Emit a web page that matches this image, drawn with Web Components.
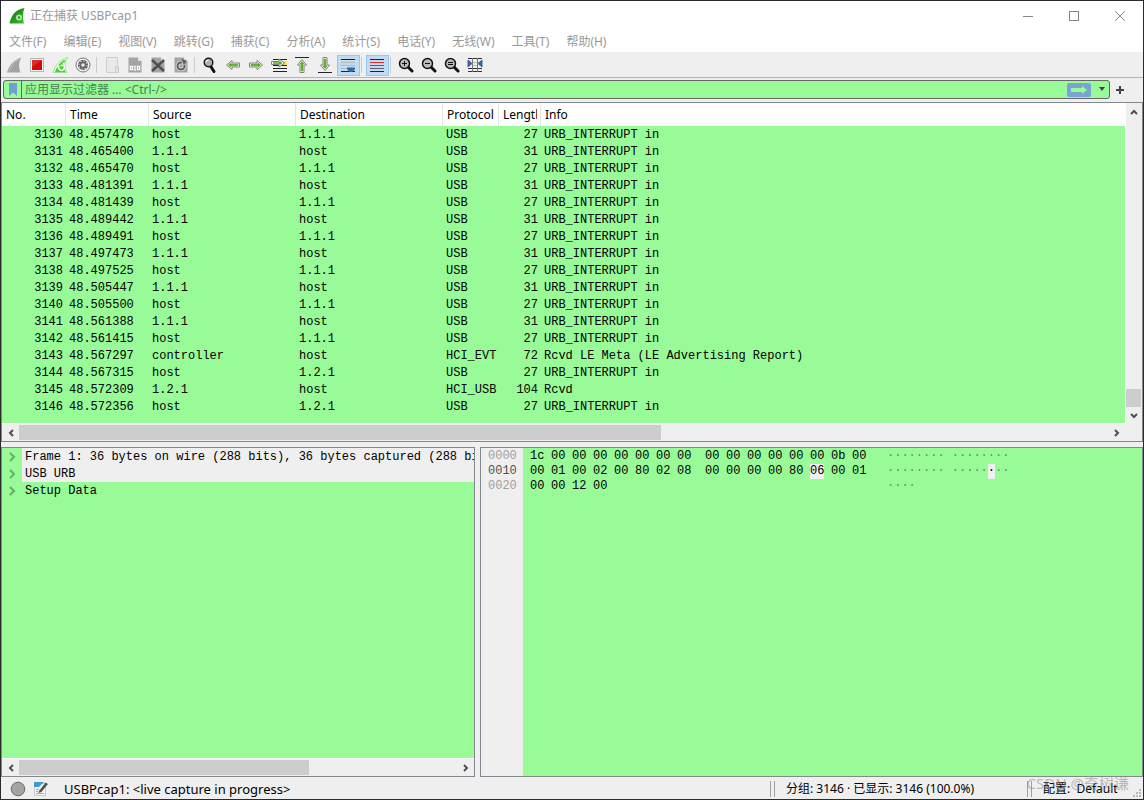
<!DOCTYPE html>
<html lang="zh-CN">
<head>
<meta charset="utf-8">
<title>USBPcap1</title>
<style>
html,body{margin:0;height:100%}
body{font:12px/16px "Noto Sans","Noto Sans CJK SC",sans-serif;color:#000;background:#efefef;--mono:"Liberation Mono",monospace}
</style>
</head>
<body>
<capture-window></capture-window>
<script>
const define=(name,css,html)=>{
  customElements.define(name,class extends HTMLElement{
    constructor(){super();this.attachShadow({mode:'open'})}
    connectedCallback(){
      const h=typeof html==='function'?html(this):html;
      this.shadowRoot.innerHTML='<style>*{box-sizing:border-box}'+css+'</style>'+h;
    }
  });
};

/* ---------- icons, 16 x 16 ---------- */
const fin='M1 15.500C3 9 7 3 15.500.500C12.500 5 12.500 10 14.500 15.500Z';
const page='<path d="M1.500.500H11L14.500 4V15.500H1.500Z" fill="#a3a5a2"/><path d="M11 .500V4h3.500Z" fill="#e8e8e8"/>';
const lens='<path d="M10 10L14 14" stroke="#111" stroke-width="3" stroke-linecap="round"/><circle cx="6.500" cy="6.500" r="5" fill="#b9bcbb" stroke="#111" stroke-width="1.500"/>';
const arrow='<path d="M1.500 8L7 3.500V6H14.500V10H7V12.500Z" fill="#fff" stroke="#7f827d"/><path d="M3.500 8L6 6V7.200H13V8.800H6V10Z" fill="#4caa10" stroke="#4caa10" stroke-width=".6"/>';
const ICONS={
 app:`<defs><linearGradient id="g" x2="1" y2="1"><stop stop-color="#0b6b12"/><stop offset="1" stop-color="#3fc52b"/></linearGradient></defs><path d="M.500 15.500C2 8 6 1.500 15.500 0C13.500 5 13.500 10 15 15.500Z" fill="url(#g)"/><circle cx="10" cy="9.500" r="3" fill="#b7e5ae"/><circle cx="10" cy="9.500" r="1.200" fill="#2e9c2a"/>`,
 fin:`<path d="${fin}" fill="#a3a3a3"/><path d="M3 14.500C5 9 8 4.500 13 2.500" fill="none" stroke="#c4c4c4"/>`,
 stop:'<rect x="1.500" y="1.500" width="13" height="13" fill="#fff" stroke="#b5b5b5"/><rect x="3" y="3" width="10" height="10" fill="#d80808"/><path d="M3 3H13L3 10Z" fill="#f04a4a" opacity=".5"/>',
 restart:`<path d="${fin}" fill="#fff" stroke="#9adf90"/><path d="M3 15C5 9 8 4.500 13.500 2.500C11.500 6 12 11 13.500 15Z" fill="#3cdd22"/><path d="M7 8.500a3 3 0 1 0 4.500-.5M11.500 5.500V8.500H8.500" fill="none" stroke="#fff" stroke-width="1.600"/>`,
 gear:'<circle cx="8" cy="8" r="7" fill="#f4f4f4" stroke="#777"/><circle cx="8" cy="8" r="5" fill="#555"/><circle cx="8" cy="8" r="4" fill="none" stroke="#ddd" stroke-width="1.200" stroke-dasharray="1.500 1.600"/><circle cx="8" cy="8" r="3.200" fill="#666"/><circle cx="8" cy="8" r="1.800" fill="#e8e8e8"/>',
 open:'<path d="M2.500 .500H13.500V15.500H2.500Z" fill="#e9e9e9" stroke="#cfcfcf"/><path d="M11.500 9.500H14.500V15.500H11.500Z" fill="#e0e0e0" stroke="#cdcdcd"/>',
 save:page+'<rect x="2" y="8" width="12" height="6" fill="#b5b6b4"/><g fill="none" stroke="#fff"><rect x="3.500" y="9.500" width="2" height="3"/><path d="M8 9V13M7 9.500H8M7 13H9"/><rect x="10.500" y="9.500" width="2" height="3"/></g>',
 close:page+'<path d="M2 3L14 14M14 3L2 14" stroke="#4e504e" stroke-width="2.400"/>',
 reload:page+'<path d="M11.500 7.500V9A3.500 3.500 0 1 1 8 5.500H9.500" fill="none" stroke="#e4e4e4" stroke-width="3.500"/><path d="M11.500 8V9A3.500 3.500 0 1 1 8 5.500H9" fill="none" stroke="#5a5c5a" stroke-width="2"/><path d="M8.500 2L13.500 3.500L11 8Z" fill="#5a5c5a"/>',
 find:'<path d="M8.500 9L12 14.500" stroke="#111" stroke-width="3" stroke-linecap="round"/><circle cx="6.500" cy="5.500" r="4.300" fill="#aeb1b1" stroke="#151515" stroke-width="1.400"/><path d="M4 5.500A2.500 2.500 0 0 1 6.500 3" fill="none" stroke="#fff"/>',
 back:arrow,
 fwd:`<g transform="rotate(180 8 8)">${arrow}</g>`,
 goto:'<path d="M2 2.500H16M2 8.500H16M2 11.500H16M2 14.500H16" stroke="#222"/><rect x="11" y="4" width="5" height="4" fill="#fbe05a"/><path d="M.500 4.500H8V2L13.500 6L8 10V7.500H.500Z" fill="#fff" stroke="#7f827d"/><path d="M2 6H11M9 4.500V7.500" stroke="#4caa10" stroke-width="1.600"/>',
 top:`<path d="M1 .500H15" stroke="#222"/><g transform="translate(0 1) rotate(90 8 8)">${arrow}</g>`,
 bottom:`<path d="M1 15.500H15" stroke="#222"/><g transform="translate(0 -1) rotate(-90 8 8)">${arrow}</g>`,
 auto:'<path d="M1 2.500H15M1 14.500H15" stroke="#222"/><path d="M1 5.500H15M1 8.500H15M1 11.500H15" stroke="#b5bab5"/><path d="M7 10.500H15V12L12.500 15H9.500L7 12Z" fill="#3465a4"/>',
 color:'<path d="M1 2.500H15M1 14.500H15" stroke="#222"/><path d="M1 5.500H15" stroke="#ef2929"/><path d="M1 8.500H15" stroke="#3465a4"/><path d="M1 11.500H15" stroke="#75507b"/>',
 zin:lens+'<path d="M4 6.500H9M6.500 4V9" stroke="#111"/>',
 zout:lens+'<path d="M4 6.500H9" stroke="#111"/>',
 z1:lens+'<path d="M4 5.500H9M4 7.500H9" stroke="#111"/>',
 resize:'<path d="M1 1.500H15M1 14.500H15M1 11.500H15" stroke="#333"/><path d="M5 5.500H11M5 8.500H11" stroke="#b5bab5"/><path d="M5.500 1V15M10.500 1V15" stroke="#777"/><path d="M1 3V10L5 6.500ZM15 3V10L11 6.500Z" fill="#3465a4" stroke="#3465a4"/>',
 note:'<rect x="1.500" y="2.500" width="11" height="12" fill="#f4f6f4" stroke="#c8ccc8"/><path d="M1 1H11L6 6H1Z" fill="#3f9bd0"/><path d="M3 8.500H6M3 10.500H5M3 12.500H11" stroke="#a7aba7"/><path d="M6 10L12.500 1.500L15 3L8.500 11L5.500 12Z" fill="#555"/>',
 led:'<circle cx="8" cy="8" r="6.800" fill="#a2a5a0" stroke="#686b68"/>',
 mark:'<path d="M4 1H12V14L8 10.500L4 14Z" fill="#729fcf"/>'
};
define('svg-icon',':host{display:block;width:16px;height:16px}svg{display:block}',
  el=>`<svg width="16" height="16" viewBox="0 0 16 16" aria-hidden="true">${ICONS[el.getAttribute('name')]}</svg>`);

/* ---------- title bar ---------- */
define('title-bar',`:host{display:flex;align-items:center;height:30px;padding-left:8px;background:#fff;color:#999}
 h1{font:inherit;margin:0 0 0 5px;flex:1}
 button{width:46px;height:30px;border:0;background:none;padding:0;display:grid;place-items:center}`,
 `<svg-icon name="app"></svg-icon><h1><slot></slot></h1>
 <button aria-label="最小化"><svg width="12" height="12"><path d="M1 6.500H11" stroke="#888"/></svg></button>
 <button aria-label="最大化"><svg width="12" height="12"><rect x="1.500" y="1.500" width="9" height="9" fill="none" stroke="#888"/></svg></button>
 <button aria-label="关闭"><svg width="12" height="12"><path d="M1 1L11 11M11 1L1 11" stroke="#888"/></svg></button>`);

/* ---------- menu ---------- */
define('menu-bar',`:host{display:flex;gap:1px;height:22px;background:#fff;border-bottom:1px solid #eee}
 button{font:inherit;border:0;background:none;color:#999;padding:0 8px;white-space:nowrap}`,
 ()=>['文件(F)','编辑(E)','视图(V)','跳转(G)','捕获(C)','分析(A)','统计(S)','电话(Y)','无线(W)','工具(T)','帮助(H)'].map(t=>`<button>${t}</button>`).join(''));

/* ---------- toolbar ---------- */
define('tool-bar',`:host{display:flex;align-items:center;height:25px;padding-left:2px;border-bottom:1px solid #b4b4b4}
 button{width:23px;height:21px;padding:0 1px 0 0;border:1px solid transparent;background:none;display:grid;place-items:center}
 button[aria-pressed]{background:#c0dcf3;border-color:#90c8f6}
 svg-icon{justify-self:start;margin-left:2px}
 i{width:6px;height:16px;background:linear-gradient(#ccc,#ccc) 1px 0/1px 100% no-repeat}`,
 ()=>['fin:开始捕获','stop:停止捕获','restart:重新捕获','gear:捕获选项','','open:打开','save:保存','close:关闭','reload:重新加载','','find:查找','back:后退','fwd:前进','goto:转到分组','top:首个分组','bottom:最新分组','auto:自动滚动:1','','color:着色:1','','zin:放大','zout:缩小','z1:正常大小','resize:调整列宽']
 .map(s=>{if(!s)return '<i></i>';const [n,l,p]=s.split(':');return `<button aria-label="${l}"${p?' aria-pressed="true"':''}><svg-icon name="${n}"></svg-icon></button>`}).join(''));

/* ---------- display filter ---------- */
define('filter-bar',`:host{display:flex;align-items:flex-start;height:24px;padding:2px 13px 0 2px}
 .box{flex:1;display:flex;align-items:center;height:19px;border:1px solid #666;border-radius:3px;background:#98fb98}
 button{border:0;background:none;padding:0;display:grid;place-items:center}
 .mark{width:18px;height:17px;border-right:1px solid #666}
 input{flex:1;min-width:0;border:0;outline:0;background:none;font:inherit;height:17px;padding:0 3px}
 input::placeholder{color:#4a8050;opacity:1}
 .go{width:24px;height:14px;background:#7ba3d2;border-radius:2px}
 .drop{width:18px;height:17px;padding-left:4px}
 .add{width:20px;height:20px}`,
 `<div class="box"><button class="mark" aria-label="书签"><svg-icon name="mark"></svg-icon></button>
 <input aria-label="显示过滤器" placeholder="应用显示过滤器 … &lt;Ctrl-/&gt;">
 <button class="go" aria-label="应用"><svg width="18" height="10"><path d="M1 3H12V1L17 5L12 9V7H1Z" fill="#98fb98"/></svg></button>
 <button class="drop" aria-label="历史"><svg width="8" height="5"><path d="M1 0H7L4 4Z" fill="#444"/></svg></button></div>
 <button class="add" aria-label="添加"><svg width="10" height="10"><path d="M5 1V9M1 5H9" stroke="#444" stroke-width="2"/></svg></button>`);

/* ---------- scroll bar ---------- */
define('scroll-bar',`:host{display:flex;background:#efefef;height:17px;border:solid #efefef;border-width:1px 0}
 :host([vertical]){flex-direction:column;width:17px;height:auto;border-width:0 1px}
 button{flex:none;width:17px;height:15px;padding:0;border:0;background:none;display:grid;place-items:center}
 :host([vertical]) button{width:15px;height:17px}
 :host([vertical]) svg{transform:rotate(90deg)}
 .track{flex:1;display:flex;flex-direction:inherit}
 .before{flex:var(--before,0)}.thumb{flex:var(--size,1);background:#cdcdcd}.after{flex:var(--after,1)}`,
 `<button aria-label="后退"><svg width="8" height="8"><path d="M6 1L3 4L6 7" fill="none" stroke="#505050" stroke-width="2"/></svg></button>
 <div class="track"><div class="before"></div><div class="thumb"></div><div class="after"></div></div>
 <button aria-label="前进"><svg width="8" height="8"><path d="M2 1L5 4L2 7" fill="none" stroke="#505050" stroke-width="2"/></svg></button>`);

/* ---------- packet list ---------- */
const PACKETS=[
 ['3130','48.457478'],['3131','48.465400'],['3132','48.465470'],['3133','48.481391'],['3134','48.481439'],['3135','48.489442'],['3136','48.489491'],['3137','48.497473'],['3138','48.497525'],['3139','48.505447'],['3140','48.505500'],['3141','48.561388'],['3142','48.561415'],
 ['3143','48.567297','controller','host','HCI_EVT','72','Rcvd LE Meta (LE Advertising Report)'],
 ['3144','48.567315','host','1.2.1','USB','27','URB_INTERRUPT in'],
 ['3145','48.572309','1.2.1','host','HCI_USB','104','Rcvd'],
 ['3146','48.572356','host','1.2.1','USB','27','URB_INTERRUPT in']
].map((r,i)=>r.length>2?r:[...r,...(i%2?['1.1.1','host','USB','31']:['host','1.1.1','USB','27']),'URB_INTERRUPT in']);
define('packet-list',`:host{display:grid;grid-template-columns:1fr 17px;grid-template-rows:1fr 17px;border:1px solid #828790;background:#98fb98;min-height:0}
 .view{overflow:hidden;min-width:0;border-bottom:1px solid #fff}
 table{table-layout:fixed;border-collapse:separate;border-spacing:0;width:100%}
 th{height:23px;background:#fff;font-weight:normal;text-align:left;padding:0 3px 0 4px;border-right:1px solid #e5e5e5}
 th span{display:block;overflow:hidden;white-space:nowrap}
 th:last-child{border:0}
 td{height:17px;padding:2px 3px 0;font-family:var(--mono);line-height:15px;white-space:pre}
 td:nth-child(1),td:nth-child(6){text-align:right}
 scroll-bar[vertical]{grid-row:1/3;grid-column:2;margin-bottom:17px;border-left-color:#fff}
 .corner{grid-row:2;grid-column:2;background:#efefef}
 .h{grid-row:2;grid-column:1}`,
 ()=>`<div class="view"><table><colgroup><col style="width:64px"><col style="width:83px"><col style="width:147px"><col style="width:147px"><col style="width:56px"><col style="width:42px"><col></colgroup>
 <thead><tr>${['No.','Time','Source','Destination','Protocol','Length','Info'].map(t=>`<th><span>${t}</span></th>`).join('')}</tr></thead>
 <tbody>${PACKETS.map(r=>`<tr>${r.map(c=>`<td>${c}</td>`).join('')}</tr>`).join('')}</tbody></table></div>
 <scroll-bar vertical style="--before:269;--size:18;--after:0"></scroll-bar><div class="corner"></div>
 <scroll-bar class="h" style="--size:642;--after:447"></scroll-bar>`);

/* ---------- details tree ---------- */
define('packet-tree',`:host{display:flex;flex-direction:column;border:1px solid #828790;background:#98fb98;min-width:0}
 ul{flex:1;margin:0;padding:0;list-style:none;overflow:hidden;border-bottom:1px solid #fff;font-family:var(--mono)}
 li{display:flex;height:17px;line-height:15px;white-space:pre}
 button{flex:none;width:20px;height:17px;padding:0;border:0;background:none;display:grid;place-items:center}
 span{flex:1;min-width:0;padding:2px 0 0 3px}
 .g{background:#efefef}`,
 ()=>`<ul>${[['Frame 1: 36 bytes on wire (288 bits), 36 bytes captured (288 bits)',1],['USB URB',1],['Setup Data',0]].map(([t,g])=>`<li><button aria-label="展开"><svg width="8" height="10"><path d="M2 1L6 5L2 9" fill="none" stroke="#67ad67" stroke-width="2"/></svg></button><span class="${g?'g':''}">${t}</span></li>`).join('')}</ul>
 <scroll-bar style="--size:290;--after:148"></scroll-bar>`);

/* ---------- hex view ---------- */
define('hex-view',`:host{display:flex;border:1px solid #828790;background:#98fb98;font-family:var(--mono);line-height:15px;white-space:pre;min-width:0;overflow:hidden}
 .off{flex:none;width:42px;padding:1px 7px;background:#efefef;color:#a0a0a0}
 .off .on{color:#505050}
 .rows{display:grid;grid-template-columns:repeat(8,21px) 7px repeat(8,21px);grid-auto-rows:15px;align-content:start;padding:1px 7px}
 .asc{padding:1px 7px;color:#5d985d}
 .off>div,.asc>div{height:15px}
 b{display:inline-block;height:15px;justify-self:start;font-weight:normal;background:#efefef;color:#000}`,
 ()=>{
  const rows=['1c 00 00 00 00 00 00 00  00 00 00 00 00 00 0b 00','00 01 00 02 00 80 02 08  00 00 00 00 80 06 00 01','00 00 12 00'];
  const asc=['········ ········','········ ·····<b>·</b>··','····'];
  const cell=(c,i,r)=>{if(!c)return '';const t=r===1&&i===14?'b':'span';return `<${t} style="grid-area:${r+1}/${i+1}">${c}</${t}>`};
  return `<div class="off"><div>0000</div><div class="on">0010</div><div>0020</div></div><div class="rows">${rows.map((s,r)=>s.split(' ').map((c,i)=>cell(c,i,r)).join('')).join('')}</div><div class="asc">${asc.map(r=>`<div>${r}</div>`).join('')}</div>`;
 });

/* ---------- status bar ---------- */
define('status-bar',`:host{display:flex;align-items:center;height:22px;padding:1px 0 0 9px;position:relative;white-space:nowrap}
 button{padding:0;border:0;background:none;margin-right:7px}
 .msg{flex:1;margin-left:8px;font-size:13px}
 .cell{border-left:1px solid #a0a0a0;padding-left:3px}
 .cell>span{display:block;border-left:1px solid #a0a0a0;padding-left:11px}
 .count{width:257px}.prof{width:116px}
 .grip{position:absolute;right:1px;bottom:1px}
 .mark{position:absolute;right:14px;bottom:6px;font-size:15px;line-height:20px;color:#8888}`,
 `<button aria-label="专家信息"><svg-icon name="led"></svg-icon></button><button aria-label="捕获注释"><svg-icon name="note"></svg-icon></button>
 <span class="msg">USBPcap1: &lt;live capture in progress&gt;</span>
 <span class="cell count"><span>分组: 3146 · 已显示: 3146 (100.0%)</span></span>
 <span class="cell prof"><span>配置:&nbsp; Default</span></span>
 <svg class="grip" width="9" height="9" fill="#bbb"><path d="M6 0h2v2h-2zM3 3h2v2h-2zM6 3h2v2h-2zM0 6h2v2h-2zM3 6h2v2h-2zM6 6h2v2h-2z"/></svg>
 <span class="mark">CSDN @奇树谦</span>`);

define('capture-window',`:host{display:flex;flex-direction:column;min-height:100vh;border:1px solid #2b2b2b;box-sizing:border-box}
 packet-list{flex:338 1 0}
 .lower{flex:330 1 0;display:grid;grid-template-columns:474fr 663fr;gap:5px;margin-top:5px;min-height:0}`,
 `<title-bar>正在捕获 USBPcap1</title-bar><menu-bar></menu-bar><tool-bar></tool-bar><filter-bar></filter-bar>
 <packet-list></packet-list><div class="lower"><packet-tree></packet-tree><hex-view></hex-view></div><status-bar></status-bar>`);
</script>
</body>
</html>
